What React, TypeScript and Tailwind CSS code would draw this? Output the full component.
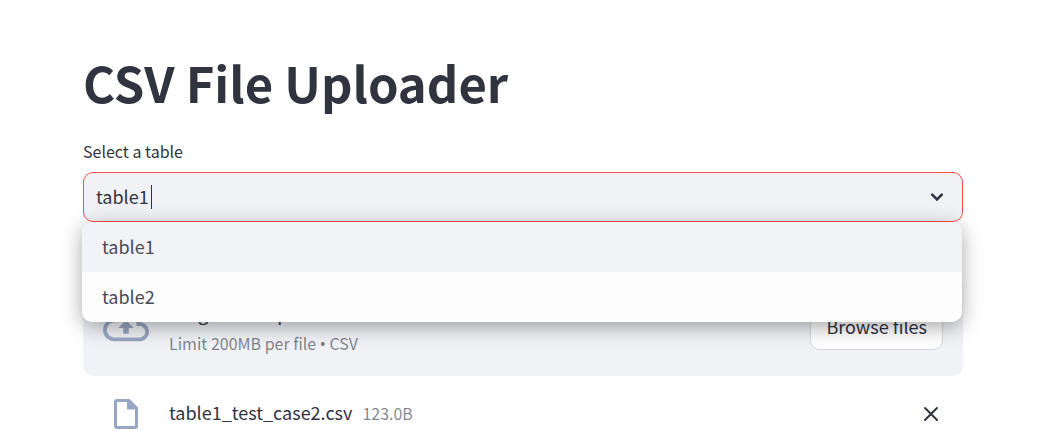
import { useState } from "react";

const tables = ["table1", "table2"];

function CloudUpload() {
  return (
    <svg viewBox="0 0 24 24" className="size-[46px] shrink-0 fill-[#97a6c3]" aria-hidden="true">
      <path d="M19.35 10.04A7.49 7.49 0 0 0 12 4C9.11 4 6.6 5.64 5.35 8.04A5.994 5.994 0 0 0 0 14c0 3.31 2.69 6 6 6h13c2.76 0 5-2.24 5-5 0-2.64-2.05-4.78-4.65-4.96zM19 18H6c-2.21 0-4-1.79-4-4s1.79-4 4-4h.71C7.37 7.69 9.48 6 12 6c3.04 0 5.5 2.46 5.5 5.5v.5H19c1.66 0 3 1.34 3 3s-1.34 3-3 3zM8 13h2.55v3h2.9v-3H16l-4-4z" />
    </svg>
  );
}

function FileIcon() {
  return (
    <svg viewBox="0 0 24 30" className="h-[30px] w-6 fill-[#97a6c3]" aria-hidden="true">
      <path
        fillRule="evenodd"
        d="M3 0H15.5L24 8.5V27a3 3 0 0 1-3 3H3a3 3 0 0 1-3-3V3a3 3 0 0 1 3-3zM3 3V27H21V10.5H13V3z"
      />
    </svg>
  );
}

function TableSelect() {
  const [value, setValue] = useState("table1");
  return (
    <div className="flex flex-col">
      <label htmlFor="table" className="pb-[9px] text-base leading-6">
        Select a table
      </label>
      <div className="relative">
        <div className="flex h-[50px] items-center rounded-[10px] border border-[#ff4b4b] bg-[#f0f2f6] pr-[15px] pl-3">
          <input
            id="table"
            role="combobox"
            aria-expanded="true"
            aria-controls="table-options"
            value={value}
            onChange={(e) => setValue(e.target.value)}
            className="field-sizing-content bg-transparent pb-0.5 text-lg leading-6 caret-transparent outline-none"
          />
          <span className="ml-0.5 h-6 w-px bg-[#31333f]" />
          <svg
            viewBox="0 0 20 20"
            className="ml-auto size-5 fill-none stroke-[#31333f]"
            strokeWidth="2.6"
            strokeLinecap="round"
            aria-hidden="true"
          >
            <path d="M5.2 7.7 10 12.5 14.8 7.7" />
          </svg>
        </div>
        <ul
          id="table-options"
          role="listbox"
          aria-label="Tables"
          className="absolute top-full right-px -left-px z-10 overflow-hidden rounded-[10px] bg-[#fdfdfd] shadow-[0_5px_20px_rgba(0,0,0,0.35)]"
        >
          {tables.map((name) => (
            <li
              key={name}
              role="option"
              aria-selected={name === value}
              onClick={() => setValue(name)}
              className="flex h-[50px] items-center px-5 pb-0.5 text-lg leading-6 text-[#484a55] aria-selected:bg-[#f2f3f7]"
            >
              {name}
            </li>
          ))}
        </ul>
      </div>
    </div>
  );
}

function Uploader() {
  return (
    <section className="mt-[53px]">
      <div className="flex items-center rounded-[10px] bg-[#f0f2f6] p-5">
        <CloudUpload />
        <div className="ml-5 flex-1">
          <p className="text-lg leading-9">Drag and drop file here</p>
          <p className="text-base leading-6 text-[#31333f]/60">
            Limit 200MB per file <span className="font-['Noto_Sans']">•</span> CSV
          </p>
        </div>
        <button
          type="button"
          className="h-12 rounded-[10px] border border-[#d6d7db] bg-white px-[15px] text-lg leading-6"
        >
          Browse files
        </button>
      </div>
      <div className="flex items-center px-5 py-5">
        <div className="flex w-[46px] justify-center">
          <FileIcon />
        </div>
        <span className="ml-5 pb-1 text-lg leading-8">table1_test_case2.csv</span>
        <span className="ml-2.5 pb-0.5 text-base leading-8 text-[#31333f]/60">123.0B</span>
        <button type="button" aria-label="Remove file" className="ml-auto p-1">
          <svg viewBox="0 0 16 16" className="size-4 stroke-[#31333f] stroke-2" strokeLinecap="round" aria-hidden="true">
            <path d="M2 2 14 14M14 2 2 14" />
          </svg>
        </button>
      </div>
    </section>
  );
}

export default function App() {
  return (
    <main className="h-screen overflow-hidden bg-white pt-12 pr-[87px] pl-[83px] font-['Noto_Sans_CJK_SC',sans-serif] text-[#31333f]">
      <h1 className="mb-[23px] text-[49px] leading-[68px] font-bold">CSV File Uploader</h1>
      <TableSelect />
      <Uploader />
    </main>
  );
}
